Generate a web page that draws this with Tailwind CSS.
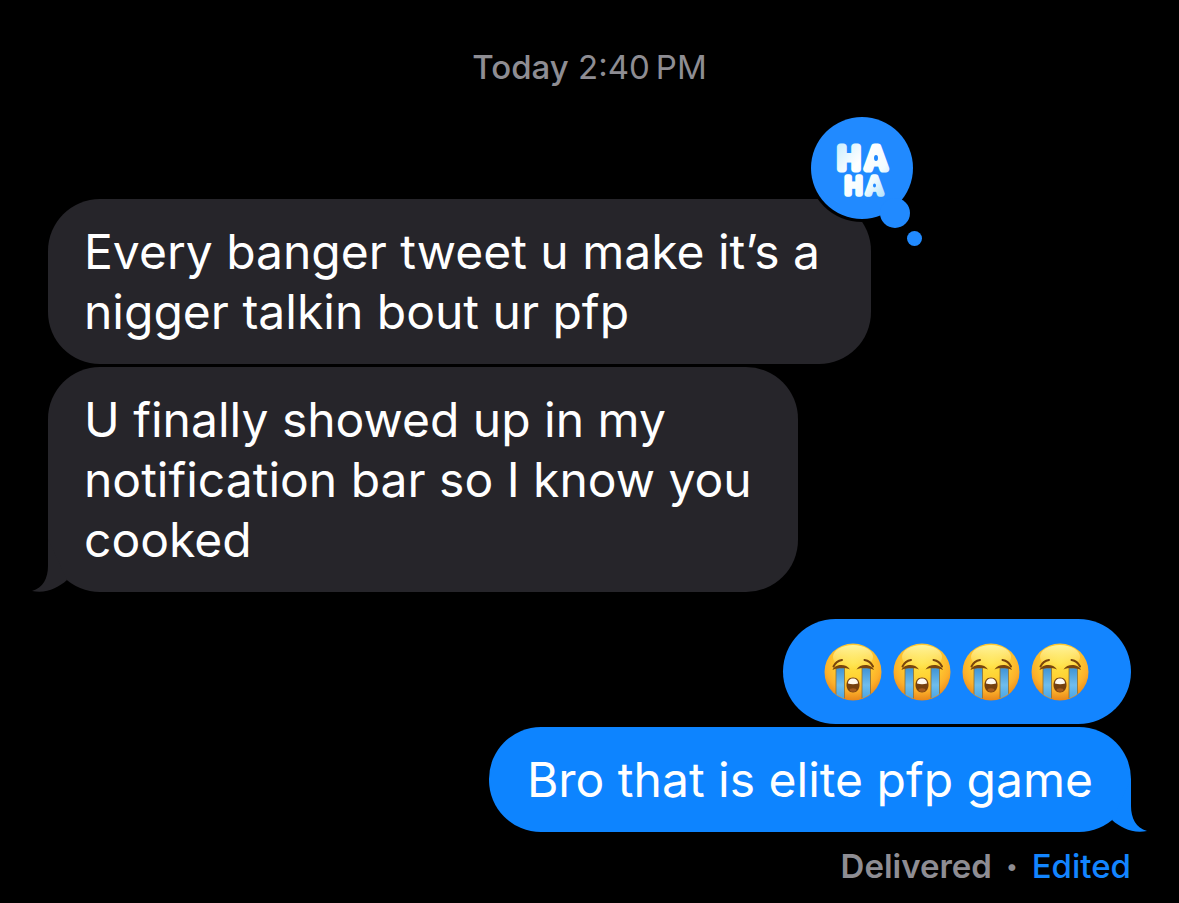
<!DOCTYPE html>
<html lang="en">
<head>
    <meta charset="UTF-8">
    <meta name="viewport" content="width=device-width, initial-scale=1.0">
    <title>Messages</title>
    <script src="https://cdn.jsdelivr.net/npm/@tailwindcss/browser@4"></script>
</head>
<body class="min-h-screen bg-black font-['Inter','Liberation_Sans',sans-serif] text-white">
    <!-- Shared emoji artwork -->
    <svg class="absolute size-0" aria-hidden="true">
        <defs>
            <radialGradient id="face" cx="50%" cy="34%" r="66%">
                <stop offset="0" stop-color="#ffe344"/>
                <stop offset="0.4" stop-color="#ffd233"/>
                <stop offset="0.75" stop-color="#fcb02a"/>
                <stop offset="1" stop-color="#e8861a"/>
            </radialGradient>
            <linearGradient id="shine" x1="0" y1="0" x2="0" y2="1">
                <stop offset="0" stop-color="#fff9a8" stop-opacity="0.9"/>
                <stop offset="1" stop-color="#fff6a0" stop-opacity="0"/>
            </linearGradient>
            <linearGradient id="tear" x1="0" y1="0" x2="0" y2="1">
                <stop offset="0" stop-color="#3f93d6"/>
                <stop offset="0.5" stop-color="#6fbdec"/>
                <stop offset="1" stop-color="#3f9fe4"/>
            </linearGradient>
            <clipPath id="faceClip"><circle cx="29" cy="29" r="28"/></clipPath>
            <symbol id="sob" viewBox="0 0 58 58">
                <circle cx="29" cy="29" r="28.500" fill="url(#face)"/>
                <ellipse cx="29" cy="14" rx="20" ry="12" fill="url(#shine)"/>
                <g clip-path="url(#faceClip)" fill="url(#tear)" stroke="#8d7032" stroke-width="0.800">
                    <path d="M12 25h8.500v34h-8.500z"/>
                    <path d="M38 25h8.500v34h-8.500z"/>
                </g>
                <g fill="none" stroke="#79450d" stroke-linecap="round" stroke-width="2">
                    <path d="M9.500 23.500Q12 18 18 17M49 23.500Q46.500 18 40.500 17"/>
                </g>
                <g fill="#79450d">
                    <path d="M8.500 27C11 21 22 20 26 26.500C21 24.500 14 24.500 8.500 27Z"/>
                    <path d="M50 27C47.500 21 36.500 20 32.500 26.500C37.500 24.500 44.500 24.500 50 27Z"/>
                </g>
                <path d="M29 34.500c4.500 0 6.500 3.500 6.500 7.500s-2.500 7.500-6.500 7.500-6.500-3.500-6.500-7.500 2-7.500 6.500-7.500z" fill="#75400f"/>
                <path d="M29 35.500c3 0 5 2 5 5q-5 1.500-10 0c0-3 2-5 5-5z" fill="#fff8ec"/>
                <ellipse cx="29" cy="47" rx="3.500" ry="1.800" fill="#a45a1d"/>
            </symbol>
        </defs>
    </svg>

    <main class="flex flex-col px-12 pt-12">
        <time class="mb-[112px] text-center text-[33px] leading-[39px] text-[#8e8d93]"><span class="font-medium">Today</span> 2:40&#8239;PM</time>

        <!-- Received -->
        <section class="flex flex-col items-start gap-[3px] text-[48px] leading-[60px]">
            <div class="relative w-full max-w-[823px] rounded-[52px] bg-[#26252a] pt-[23px] pb-[22px] pl-9">
                <p>Every banger tweet u make it’s a<br>nigger talkin bout ur pfp</p>
                <!-- Tapback -->
                <svg class="absolute -top-[85px] -right-[51px] h-[132px] w-[114px]" viewBox="808 114 114 132" role="img" aria-label="Haha reaction">
                    <defs>
                        <linearGradient id="puff" x1="0" y1="0" x2="1" y2="1">
                            <stop offset="0" stop-color="#c8edff"/>
                            <stop offset="0.4" stop-color="#ffffff"/>
                            <stop offset="0.7" stop-color="#f2fcff"/>
                            <stop offset="1" stop-color="#a9def9"/>
                        </linearGradient>
                    </defs>
                    <circle cx="862" cy="168" r="54" fill="#000"/>
                    <g fill="#218aff">
                        <circle cx="862" cy="168" r="51"/>
                        <circle cx="895" cy="213" r="15"/>
                        <circle cx="914.500" cy="238.500" r="7.500"/>
                    </g>
                    <text fill="url(#puff)" stroke="url(#puff)" stroke-linejoin="round" text-anchor="middle" font-weight="400"><tspan x="849 876" y="169" font-size="30" stroke-width="7">HA</tspan><tspan x="853.500 874.500" y="194" font-size="23" stroke-width="5.500">HA</tspan></text>
                    <g fill="#218aff">
                        <ellipse cx="876" cy="158" rx="2" ry="3"/>
                        <ellipse cx="874.500" cy="185.500" rx="1.500" ry="2"/>
                    </g>
                </svg>
            </div>
            <div class="relative w-full max-w-[750px] rounded-[52px] bg-[#26252a] pt-[23px] pb-[22px] pl-9">
                <p>U finally showed up in my<br>notification bar so I know you<br>cooked</p>
                <svg class="absolute bottom-0 -left-4 h-[53px] w-9" viewBox="0 0 36 53" fill="#26252a" aria-hidden="true">
                    <path d="M16 0V27C16 39 11 49 0 52C14 55 26 49 35 41Z"/>
                </svg>
            </div>
        </section>

        <!-- Sent -->
        <section class="mt-[27px] flex flex-col items-end gap-[3px] text-[48px] leading-[60px]">
            <div class="flex h-[105px] items-center gap-[11px] rounded-full bg-[#1385ff] pr-[42px] pl-[41px]" role="img" aria-label="😭😭😭😭">
                <svg class="size-[58px]"><use href="#sob"/></svg>
                <svg class="size-[58px]"><use href="#sob"/></svg>
                <svg class="size-[58px]"><use href="#sob"/></svg>
                <svg class="size-[58px]"><use href="#sob"/></svg>
            </div>
            <div class="relative rounded-[52px] bg-[#0d84ff] px-[38px] pt-[23px] pb-[22px]">
                <p>Bro that is elite pfp game</p>
                <svg class="absolute -right-4 bottom-0 h-[53px] w-9" viewBox="0 0 36 53" fill="#0d84ff" aria-hidden="true">
                    <path d="M20 0V27C20 39 25 49 36 52C22 55 10 49 1 41Z"/>
                </svg>
            </div>
            <p class="mt-3 flex items-center gap-[14px] text-[33px] leading-[39px] font-medium text-[#8e8d93]"><span class="font-semibold">Delivered</span><span class="text-[22px]">•</span><button type="button" class="text-[#1385ff]">Edited</button></p>
        </section>
    </main>
</body>
</html>
